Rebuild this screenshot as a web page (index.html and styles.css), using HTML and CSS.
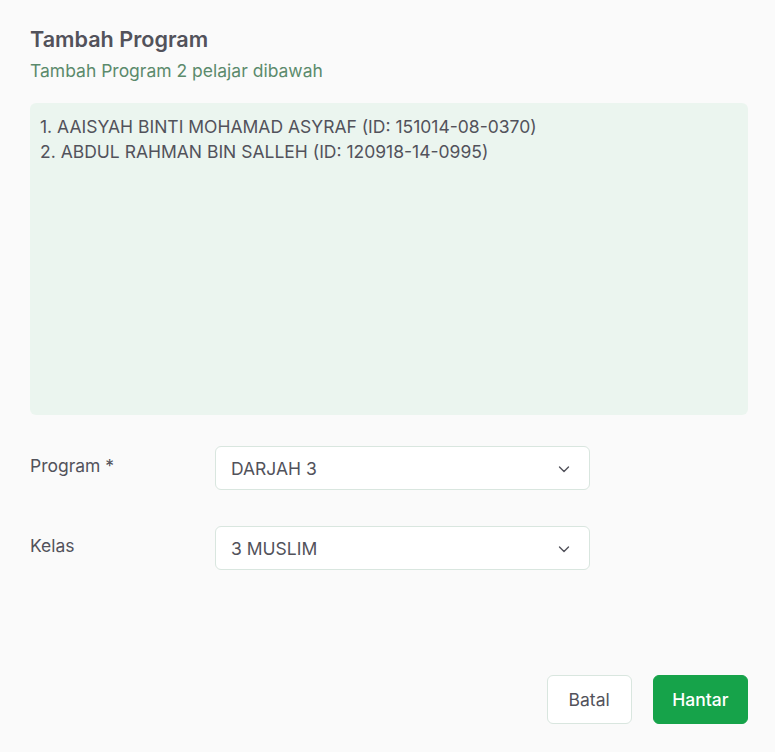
FILE: index.html
```html
<!DOCTYPE html>
<html lang="ms">
<head>
<meta charset="utf-8">
<title>Tambah Program</title>
<link rel="stylesheet" href="styles.css">
</head>
<body>
<div class="dialog">
  <header class="head">
    <h1 class="title">Tambah Program</h1>
    <p class="subtitle">Tambah Program 2 pelajar dibawah</p>
  </header>
  <div class="list">
    <div>1. AAISYAH BINTI MOHAMAD ASYRAF (ID: 151014-08-0370)</div>
    <div>2. ABDUL RAHMAN BIN SALLEH (ID: 120918-14-0995)</div>
  </div>
  <div class="form">
    <div class="row">
      <label class="label">Program *</label>
      <div class="select"><span>DARJAH 3</span>
        <svg class="chev" width="14" height="14" viewBox="0 0 14 14"><path d="M2.5 5l4.5 4.5 4.5-4.5" fill="none" stroke="#52525b" stroke-width="1.4" stroke-linecap="round" stroke-linejoin="round"/></svg>
      </div>
    </div>
    <div class="row">
      <label class="label">Kelas</label>
      <div class="select"><span>3 MUSLIM</span>
        <svg class="chev" width="14" height="14" viewBox="0 0 14 14"><path d="M2.5 5l4.5 4.5 4.5-4.5" fill="none" stroke="#52525b" stroke-width="1.4" stroke-linecap="round" stroke-linejoin="round"/></svg>
      </div>
    </div>
  </div>
  <footer class="actions">
    <button class="btn btn-cancel">Batal</button>
    <button class="btn btn-submit">Hantar</button>
  </footer>
</div>
</body>
</html>
```
FILE: styles.css
```css
html, body {
  margin: 0;
  padding: 0;
  background: #fafafa;
  font-family: Inter, "Noto Sans", sans-serif;
  color: #52525b;
}
.dialog {
  width: 775px;
  height: 752px;
  box-sizing: border-box;
  padding: 24px 27px 28px 30px;
  display: flex;
  flex-direction: column;
}
.title {
  margin: 0;
  font-size: 21.6px;
  line-height: 30px;
  font-weight: 600;
  color: #52525b;
}
.subtitle {
  margin: 4px 0 0;
  font-size: 17.5px;
  line-height: 26px;
  color: #5b8a6c;
}
.list {
  margin-top: 19px;
  height: 312px;
  box-sizing: border-box;
  background: #ebf5ef;
  border-radius: 6px;
  padding: 11px 10px;
  font-size: 17.5px;
  line-height: 25px;
  color: #52525b;
}
.form {
  margin-top: 31px;
  display: flex;
  flex-direction: column;
  gap: 36px;
}
.row {
  display: flex;
  align-items: flex-start;
}
.label {
  width: 185px;
  font-size: 17.5px;
  line-height: 24px;
  padding-top: 8px;
  color: #52525b;
}
.select {
  width: 375px;
  height: 44px;
  box-sizing: border-box;
  border: 1px solid #d9e6df;
  border-radius: 6px;
  background: #fff;
  display: flex;
  align-items: center;
  justify-content: space-between;
  padding: 0 18px 0 15px;
  font-size: 17.5px;
  color: #52525b;
}
.chev {
  margin-top: 2px;
}
.actions {
  margin-top: auto;
  display: flex;
  justify-content: flex-end;
  gap: 21px;
}
.btn {
  height: 49px;
  border-radius: 6px;
  font-family: Inter, "Noto Sans", sans-serif;
  font-size: 17.5px;
  padding: 0 21px;
  cursor: pointer;
}
.btn-cancel {
  background: #fff;
  border: 1px solid #d9e6df;
  color: #52525b;
}
.btn-submit {
  background: #16a34a;
  border: 1px solid #16a34a;
  color: #fff;
  font-weight: 500;
  padding: 0 18.5px;
}
```
